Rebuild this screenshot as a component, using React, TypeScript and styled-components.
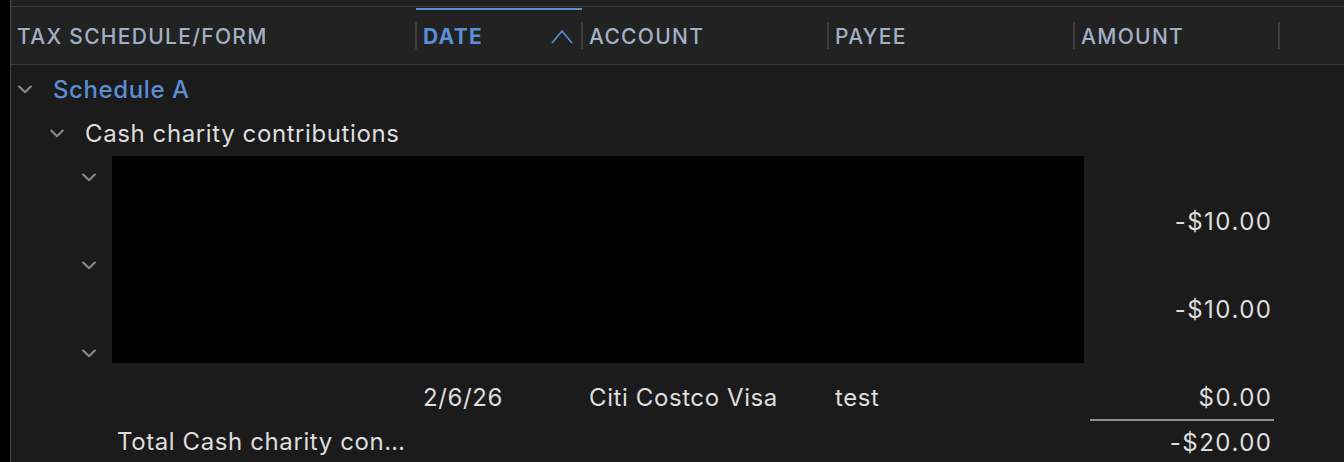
import React from "react";
import styled, { createGlobalStyle } from "styled-components";

const GlobalStyle = createGlobalStyle`
  html, body { margin: 0; padding: 0; background: #000; }
  body { font-family: Inter, "Noto Sans", "Liberation Sans", sans-serif; -webkit-font-smoothing: antialiased; }
  * { box-sizing: border-box; }
`;

const COLS = "405px 166px 246px 246px 205px 1fr";

const Page = styled.div`
  display: flex;
  width: 1344px;
  height: 462px;
  overflow: hidden;
  background: #000;
`;

const LeftStrip = styled.div`
  width: 10px;
  flex: none;
  background: #000;
`;

const Panel = styled.div`
  flex: 1;
  display: flex;
  flex-direction: column;
  border-left: 1px solid #4a4a4a;
  background: #1b1b1b;
  min-width: 0;
`;

const TopBar = styled.div`
  height: 7px;
  flex: none;
  background: #222222;
  border-bottom: 1px solid #3a3a3a;
`;

const HeaderRow = styled.div`
  display: grid;
  flex: none;
  grid-template-columns: ${COLS};
  height: 58px;
  background: #222222;
  border-bottom: 1px solid #3a3a3a;
`;

const HeaderCell = styled.div<{ $first?: boolean; $active?: boolean }>`
  position: relative;
  display: flex;
  align-items: center;
  padding-top: 1px;
  padding-left: ${(p) => (p.$first ? "6px" : "7px")};
  padding-right: 10px;
  font-size: 21px;
  letter-spacing: 1.3px;
  font-weight: ${(p) => (p.$active ? 700 : 500)};
  color: ${(p) => (p.$active ? "#5b8ed6" : "#a2b0c6")};
  white-space: nowrap;
  &::before {
    content: "";
    display: ${(p) => (p.$first ? "none" : "block")};
    position: absolute;
    left: -1px;
    top: 15px;
    height: 27px;
    width: 1.5px;
    background: #3e3e3e;
  }
  &::after {
    content: "";
    display: ${(p) => (p.$active ? "block" : "none")};
    position: absolute;
    left: 0;
    right: 0;
    top: 1px;
    height: 2px;
    background: #5b8ed6;
  }
`;

const SortIcon = styled.svg`
  margin-left: auto;
  margin-right: -1px;
  flex: none;
`;

const Body = styled.div`
  position: relative;
  padding-top: 2px;
  display: flex;
  flex-direction: column;
`;

const Row = styled.div`
  display: grid;
  grid-template-columns: ${COLS};
  height: 44px;
  flex: none;
  align-items: center;
  font-size: 24px;
  letter-spacing: 0.6px;
  color: #dedede;
`;

const TreeCell = styled.div<{ $level: number }>`
  display: flex;
  align-items: center;
  padding-left: ${(p) => 7 + p.$level * 32}px;
  min-width: 0;
  padding-right: 10px;
`;

const Chevron = styled.svg`
  flex: none;
  width: 14px;
  height: 9px;
  margin-right: 21px;
`;

const GroupLabel = styled.span<{ $accent?: boolean }>`
  color: ${(p) => (p.$accent ? "#5b8dd3" : "#dedede")};
  font-weight: ${(p) => (p.$accent ? 500 : 400)};
  white-space: nowrap;
  overflow: hidden;
  text-overflow: ellipsis;
`;

const TotalLabel = styled.div`
  padding-left: 106px;
  padding-right: 4px;
  white-space: nowrap;
  overflow: hidden;
  text-overflow: ellipsis;
`;

const TextCell = styled.div`
  padding-left: 7px;
  white-space: nowrap;
  overflow: hidden;
`;

const AmountCell = styled.div<{ $rule?: boolean }>`
  margin-left: 16px;
  margin-right: 5px;
  padding-right: 1.5px;
  align-self: stretch;
  display: flex;
  align-items: center;
  justify-content: flex-end;
  letter-spacing: 1.5px;
  border-top: ${(p) => (p.$rule ? "2px solid #8f8f8f" : "none")};
  white-space: nowrap;
`;

const Redaction = styled.div`
  position: absolute;
  left: 101px;
  top: 91px;
  width: 972px;
  height: 207px;
  background: #000;
`;

const ChevronDown = () => (
  <Chevron viewBox="0 0 14 9">
    <polyline points="1.2,1.5 7,7.2 12.8,1.5" fill="none" stroke="#8a8a8a" strokeWidth="2" strokeLinecap="round" strokeLinejoin="round" />
  </Chevron>
);

const Empty = styled.div``;

type Tx = { date: string; account: string; payee: string; amount: string };

const txs: Tx[] = [
  { date: "", account: "", payee: "", amount: "-$10.00" },
  { date: "", account: "", payee: "", amount: "-$10.00" },
  { date: "2/6/26", account: "Citi Costco Visa", payee: "test", amount: "$0.00" },
];

export default function App() {
  return (
    <>
      <GlobalStyle />
      <Page>
        <LeftStrip />
        <Panel>
          <TopBar />
          <HeaderRow>
            <HeaderCell $first>TAX SCHEDULE/FORM</HeaderCell>
            <HeaderCell $active>
              DATE
              <SortIcon width="22" height="15" viewBox="0 0 22 15">
                <polyline points="1,14 11,2 21,14" fill="none" stroke="#5b8ed6" strokeWidth="1.7" />
              </SortIcon>
            </HeaderCell>
            <HeaderCell>ACCOUNT</HeaderCell>
            <HeaderCell>PAYEE</HeaderCell>
            <HeaderCell>AMOUNT</HeaderCell>
            <HeaderCell />
          </HeaderRow>
          <Body>
            <Row>
              <TreeCell $level={0}>
                <ChevronDown />
                <GroupLabel $accent>Schedule A</GroupLabel>
              </TreeCell>
            </Row>
            <Row>
              <TreeCell $level={1}>
                <ChevronDown />
                <GroupLabel>Cash charity contributions</GroupLabel>
              </TreeCell>
            </Row>
            {txs.map((t, i) => (
              <React.Fragment key={i}>
                <Row>
                  <TreeCell $level={2}>
                    <ChevronDown />
                  </TreeCell>
                </Row>
                <Row>
                  <Empty />
                  <TextCell>{t.date}</TextCell>
                  <TextCell>{t.account}</TextCell>
                  <TextCell>{t.payee}</TextCell>
                  <AmountCell>{t.amount}</AmountCell>
                </Row>
              </React.Fragment>
            ))}
            <Row>
              <TotalLabel>Total Cash charity contributions</TotalLabel>
              <Empty />
              <Empty />
              <Empty />
              <AmountCell $rule>-$20.00</AmountCell>
            </Row>
            <Redaction />
          </Body>
        </Panel>
      </Page>
    </>
  );
}
